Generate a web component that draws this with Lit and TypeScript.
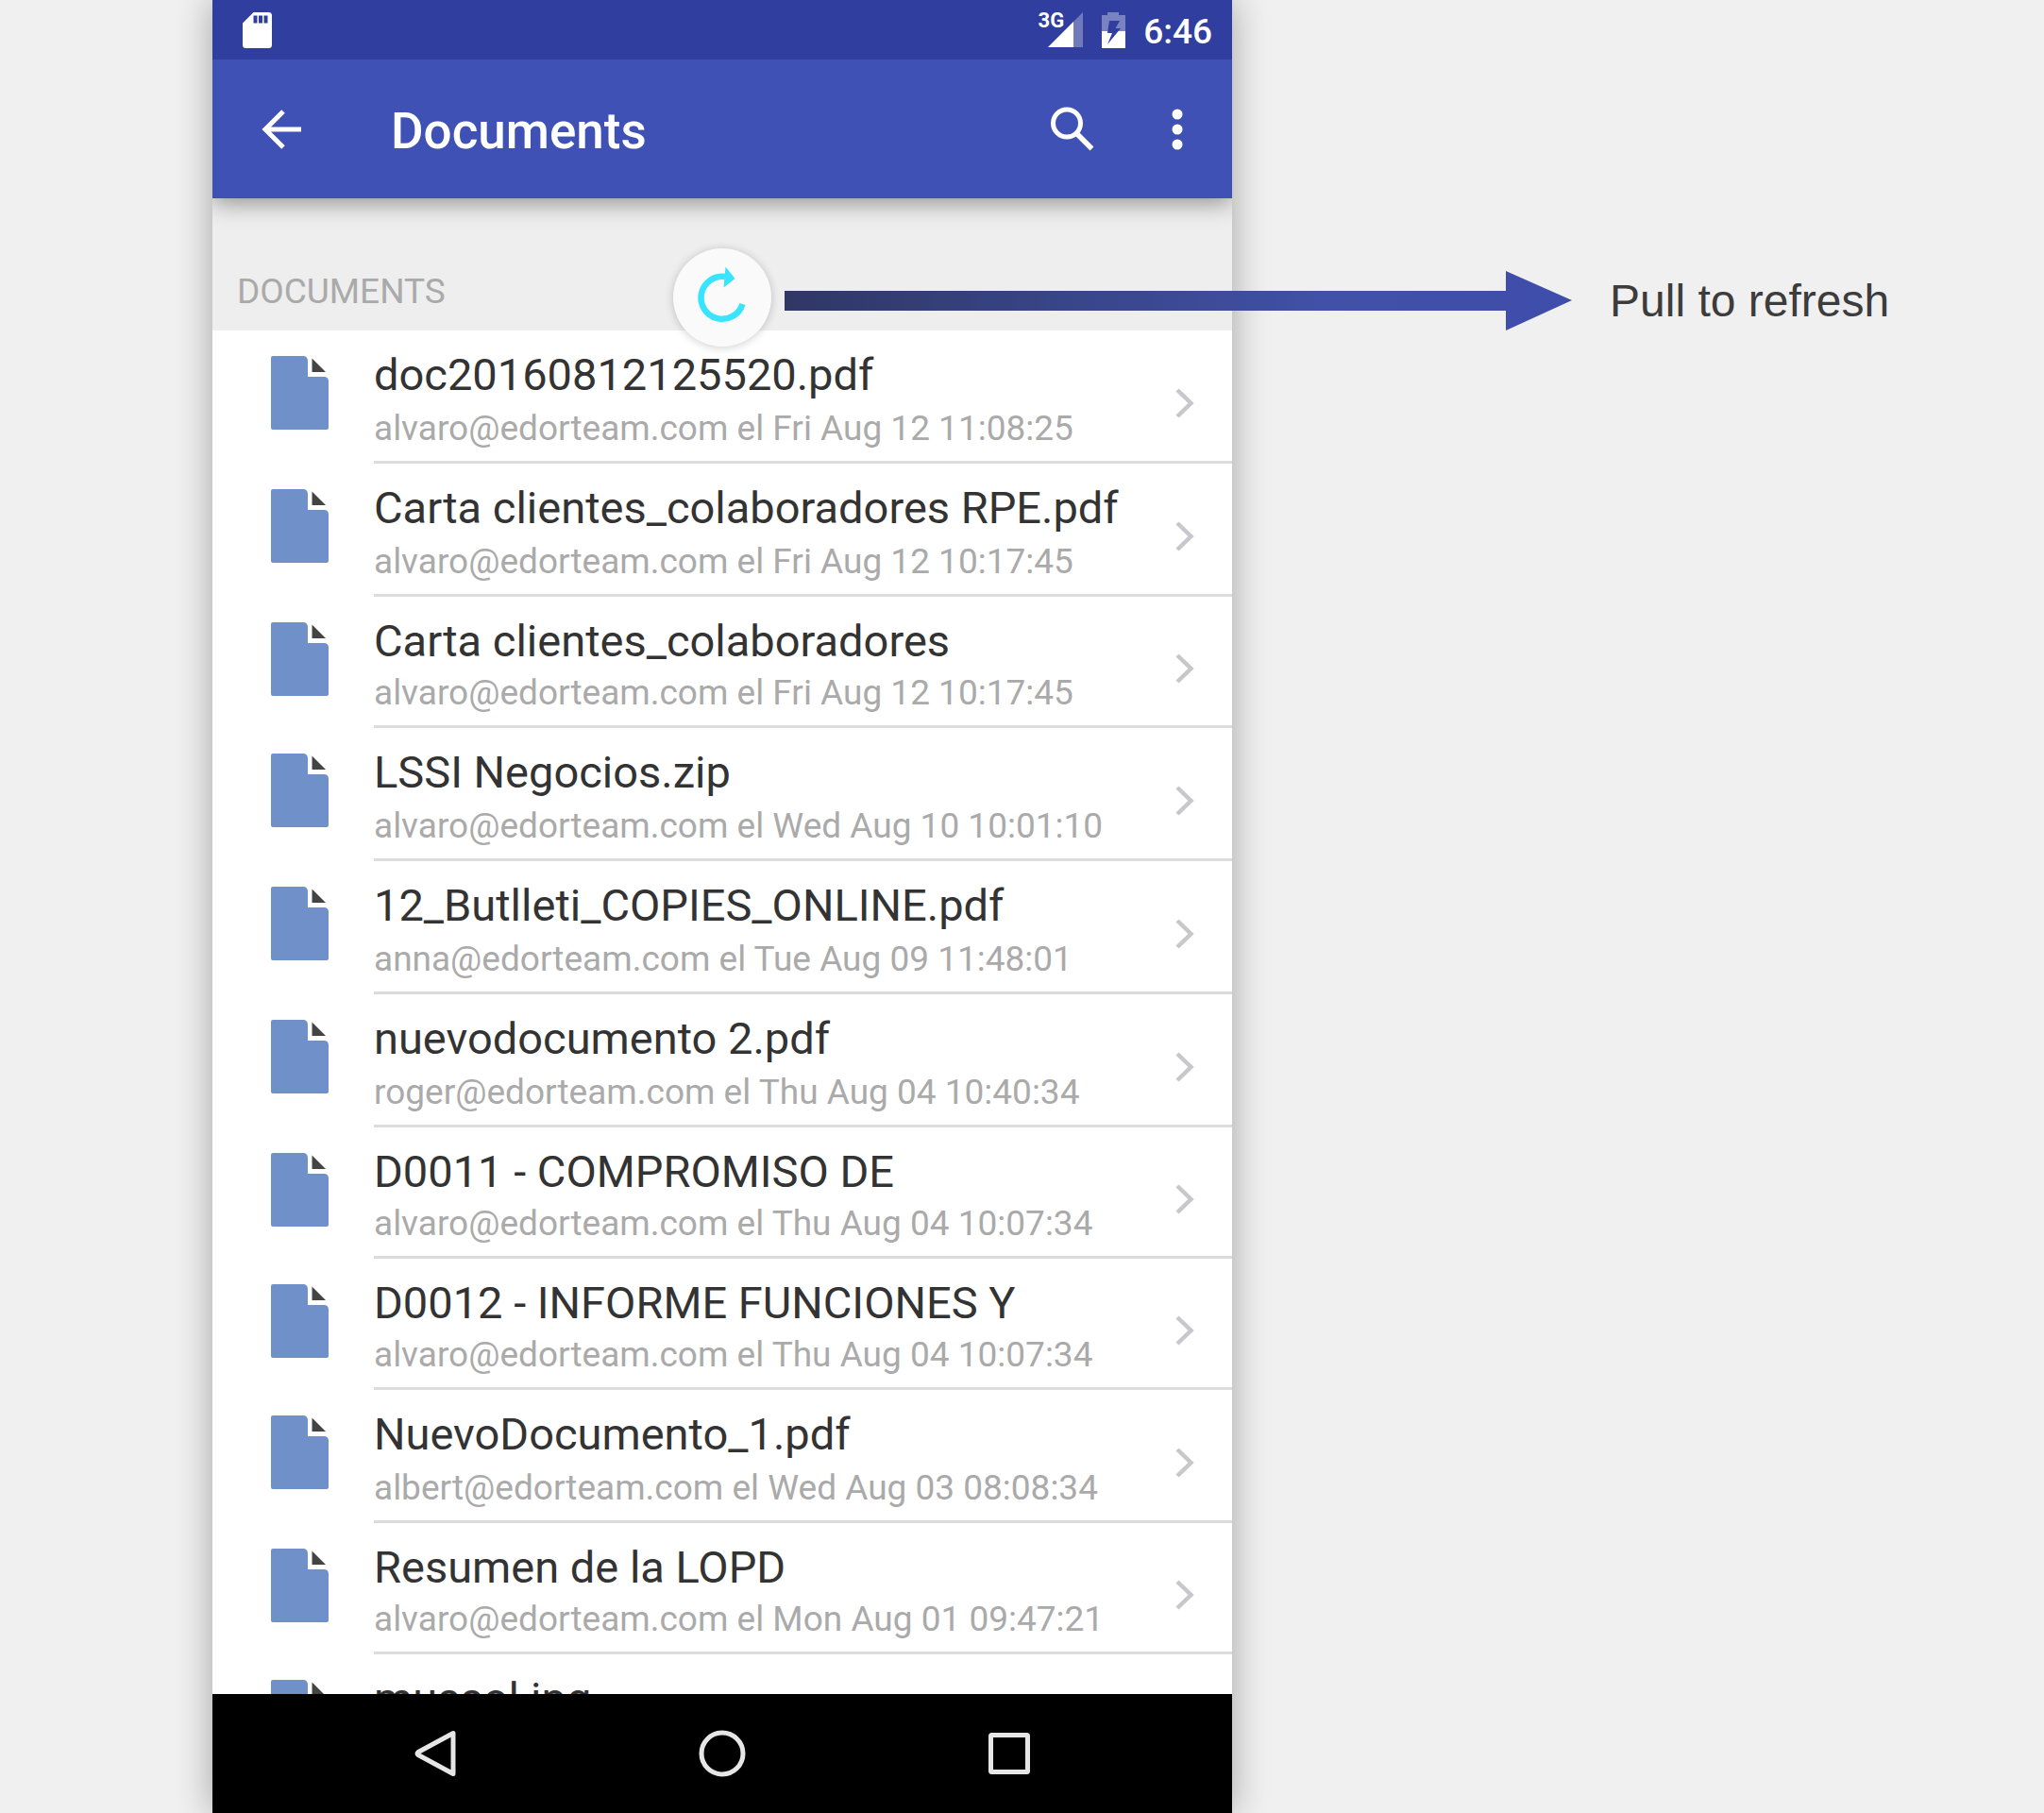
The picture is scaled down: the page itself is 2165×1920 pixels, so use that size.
import { LitElement, html, css } from "lit";
import { customElement, property } from "lit/decorators.js";

interface DocumentEntry {
  title: string;
  detail: string;
  compact?: boolean;
}

const DOCUMENTS: DocumentEntry[] = [
  { title: "doc20160812125520.pdf", detail: "alvaro@edorteam.com el Fri Aug 12 11:08:25" },
  { title: "Carta clientes_colaboradores RPE.pdf", detail: "alvaro@edorteam.com el Fri Aug 12 10:17:45" },
  { title: "Carta clientes_colaboradores", detail: "alvaro@edorteam.com el Fri Aug 12 10:17:45", compact: true },
  { title: "LSSI Negocios.zip", detail: "alvaro@edorteam.com el Wed Aug 10 10:01:10" },
  { title: "12_Butlleti_COPIES_ONLINE.pdf", detail: "anna@edorteam.com el Tue Aug 09 11:48:01" },
  { title: "nuevodocumento 2.pdf", detail: "roger@edorteam.com el Thu Aug 04 10:40:34" },
  { title: "D0011 - COMPROMISO DE", detail: "alvaro@edorteam.com el Thu Aug 04 10:07:34", compact: true },
  { title: "D0012 - INFORME FUNCIONES Y", detail: "alvaro@edorteam.com el Thu Aug 04 10:07:34", compact: true },
  { title: "NuevoDocumento_1.pdf", detail: "albert@edorteam.com el Wed Aug 03 08:08:34" },
  { title: "Resumen de la LOPD", detail: "alvaro@edorteam.com el Mon Aug 01 09:47:21", compact: true },
  { title: "mussol.jpg", detail: "" },
];

@customElement("status-bar")
export class StatusBar extends LitElement {
  static styles = css`
    :host {
      display: flex;
      align-items: center;
      height: 63px;
      padding: 0 21px 0 32px;
      background: #303e9f;
      color: #fff;
      font-family: Roboto, sans-serif;
      font-weight: 500;
    }
    svg {
      display: block;
    }
    .system {
      display: flex;
      align-items: center;
      gap: 17px;
      margin-left: auto;
    }
    .network {
      display: flex;
      align-items: flex-start;
    }
    .label {
      margin-right: -17px;
      font-size: 22px;
      line-height: 18px;
      font-weight: 700;
    }
    .clock {
      padding-top: 4px;
      font-size: 37px;
      line-height: 64px;
    }
  `;

  render() {
    return html`
      <svg width="31" height="38" viewBox="0 0 31 38" aria-hidden="true">
        <path
          fill="#fff"
          fill-rule="evenodd"
          d="M11.500 0H27.500Q31 0 31 3.500V34.500Q31 38 27.500 38H3.500Q0 38 0 34.500V11.500ZM11.500 3.500V11.500H15.500V3.500ZM17 3.500V11.500H21V3.500ZM22.500 3.500V11.500H26.500V3.500Z"
        />
      </svg>
      <div class="system">
        <div class="network">
          <span class="label">3G</span>
          <svg width="37" height="37" viewBox="0 0 37 37" aria-hidden="true">
            <path fill="#7079bc" d="M37 0V37H0Z" />
            <path fill="#fff" d="M27 10V37H0Z" />
          </svg>
        </div>
        <svg width="30" height="38" viewBox="0 0 30 38" aria-hidden="true">
          <path fill="#7a83c1" d="M9 0H21V3H28V20H3V3H9Z" />
          <path fill="#fff" d="M3 20H28V38H3Z" />
          <path fill="#303e9f" d="M11 9H22L17.500 17H23L9 34L14 22H9Z" />
        </svg>
        <span class="clock">6:46</span>
      </div>
    `;
  }
}

@customElement("tool-bar")
export class ToolBar extends LitElement {
  static styles = css`
    :host {
      position: relative;
      z-index: 1;
      display: flex;
      align-items: center;
      height: 147px;
      padding: 0 24px 0 40px;
      background: #3f51b5;
      color: #fff;
      font-family: Roboto, sans-serif;
      box-shadow: 0 4px 24px rgba(0, 0, 0, 0.42);
      clip-path: inset(0 0 -40px 0);
    }
    button {
      display: grid;
      place-items: center;
      width: 68px;
      height: 96px;
      padding: 0;
      border: 0;
      background: none;
      color: inherit;
    }
    svg {
      display: block;
    }
    .title {
      margin: 0 auto 0 81px;
      padding-top: 4px;
      font-size: 53px;
      line-height: 64px;
      font-weight: 500;
    }
    .actions {
      display: flex;
      gap: 44px;
    }
  `;

  render() {
    return html`
      <button type="button" aria-label="Back">
        <svg width="44" height="44" viewBox="0 0 44 44" aria-hidden="true">
          <path d="M42 22H5M23 3L4 22L23 41" fill="none" stroke="#fff" stroke-width="5" />
        </svg>
      </button>
      <h1 class="title">Documents</h1>
      <div class="actions">
        <button type="button" aria-label="Search">
          <svg width="48" height="48" viewBox="0 0 48 48" aria-hidden="true">
            <circle cx="19" cy="17.500" r="14.500" fill="none" stroke="#fff" stroke-width="5" />
            <path d="M29.500 28.500L45.500 44.500" stroke="#fff" stroke-width="5.500" />
          </svg>
        </button>
        <button type="button" aria-label="More options">
          <svg width="12" height="44" viewBox="0 0 12 44" aria-hidden="true">
            <circle cx="6" cy="6" r="5.500" fill="#fff" />
            <circle cx="6" cy="22" r="5.500" fill="#fff" />
            <circle cx="6" cy="38" r="5.500" fill="#fff" />
          </svg>
        </button>
      </div>
    `;
  }
}

@customElement("document-row")
export class DocumentRow extends LitElement {
  @property({ attribute: false }) entry!: DocumentEntry;

  static styles = css`
    :host {
      display: block;
      font-family: Roboto, sans-serif;
    }
    .row {
      display: flex;
      padding-left: 62px;
      color: inherit;
      text-decoration: none;
    }
    .file {
      display: block;
      flex: none;
      margin: 27px 47px 0 0;
    }
    .body {
      flex: 1;
      min-width: 0;
      display: flex;
      align-items: center;
      box-sizing: border-box;
      height: 141px;
      padding-right: 40px;
      border-bottom: 3px solid #dcdcdc;
    }
    .compact .body {
      height: 139px;
    }
    .text {
      flex: 1;
      align-self: flex-start;
      min-width: 0;
      padding-top: 18px;
      white-space: nowrap;
    }
    .title {
      font-size: 47px;
      line-height: 58px;
      color: #333;
    }
    .detail {
      font-size: 37px;
      line-height: 56px;
      color: #aaa;
    }
    .compact .detail {
      line-height: 52px;
    }
    .chevron {
      display: block;
      flex: none;
      margin-top: 16px;
    }
  `;

  render() {
    const { title, detail, compact } = this.entry;
    return html`
      <a class="row ${compact ? "compact" : ""}" href="#">
        <svg class="file" width="62" height="79" viewBox="0 0 62 79" aria-hidden="true">
          <path
            fill="#6f90c8"
            d="M2 0H34Q39 0 39 5.500V22H56Q61 22 61 27V76Q61 78 59 78H2Q0 78 0 76V2Q0 0 2 0Z"
          />
          <path fill="#444" d="M43.500 2.500L58 17H43.500Z" />
        </svg>
        <div class="body">
          <div class="text">
            <div class="title">${title}</div>
            <div class="detail">${detail}</div>
          </div>
          <svg class="chevron" width="20" height="32" viewBox="0 0 20 32" aria-hidden="true">
            <path d="M2 2L16.500 16L2 30" fill="none" stroke="#c7c7cc" stroke-width="4.500" />
          </svg>
        </div>
      </a>
    `;
  }
}

@customElement("nav-bar")
export class NavBar extends LitElement {
  static styles = css`
    :host {
      display: flex;
      justify-content: center;
      align-items: center;
      gap: 204px;
      height: 126px;
      background: #000;
    }
    button {
      display: grid;
      place-items: center;
      width: 100px;
      height: 100px;
      padding: 0;
      border: 0;
      background: none;
    }
    svg {
      display: block;
      fill: none;
      stroke: #e6e6e6;
      stroke-width: 5;
      stroke-linejoin: round;
    }
  `;

  render() {
    return html`
      <button type="button" aria-label="Back">
        <svg width="52" height="52" viewBox="0 0 52 52" aria-hidden="true">
          <path d="M45 4.500V47.500L8 27.500Q6 26 8 24.500Z" />
        </svg>
      </button>
      <button type="button" aria-label="Home">
        <svg width="52" height="52" viewBox="0 0 52 52" aria-hidden="true">
          <circle cx="26" cy="26" r="22" />
        </svg>
      </button>
      <button type="button" aria-label="Recent apps">
        <svg width="52" height="52" viewBox="0 0 52 52" aria-hidden="true">
          <rect x="6.500" y="6.500" width="39" height="39" rx="1" />
        </svg>
      </button>
    `;
  }
}

@customElement("app-root")
export class AppRoot extends LitElement {
  static styles = css`
    :host {
      display: grid;
      grid-template-columns: minmax(0, 225fr) minmax(0, 1080fr) minmax(0, 860fr);
      height: 100vh;
      overflow: hidden;
      background: #f0f0f0;
      font-family: Roboto, sans-serif;
    }
    .phone {
      grid-column: 2;
      display: flex;
      flex-direction: column;
      min-height: 0;
      background: #fff;
      box-shadow: 0 0 36px rgba(0, 0, 0, 0.32);
    }
    .content {
      position: relative;
      flex: 1;
      min-height: 0;
    }
    .list {
      height: 100%;
      overflow: hidden;
    }
    .section {
      display: flex;
      align-items: flex-end;
      box-sizing: border-box;
      height: 140px;
      margin: 0;
      padding: 0 26px 19px;
      background: #eee;
      color: #aaa;
      font-size: 37px;
      line-height: 44px;
      font-weight: 400;
    }
    .refresh {
      position: absolute;
      top: 53px;
      left: 50%;
      transform: translateX(-50%);
      display: grid;
      place-items: center;
      width: 104px;
      height: 104px;
      padding: 0;
      border: 0;
      border-radius: 50%;
      background: #fafafa;
      box-shadow: 0 1px 10px rgba(0, 0, 0, 0.2);
    }
    .refresh svg {
      display: block;
    }
    .callout {
      position: absolute;
      top: 77px;
      left: 606px;
      display: flex;
      align-items: center;
      gap: 40px;
      color: #3c3c3c;
      font-family: "Liberation Sans", sans-serif;
      font-size: 48px;
      line-height: 64px;
      white-space: nowrap;
    }
    .callout svg {
      display: block;
    }
  `;

  render() {
    return html`
      <main class="phone">
        <status-bar></status-bar>
        <tool-bar></tool-bar>
        <div class="content">
          <div class="list">
            <h2 class="section">DOCUMENTS</h2>
            ${DOCUMENTS.map((entry) => html`<document-row .entry=${entry}></document-row>`)}
          </div>
          <button class="refresh" type="button" aria-label="Refresh">
            <svg width="104" height="104" viewBox="0 0 104 104" aria-hidden="true">
              <path
                d="M55 30A22.500 22.500 0 1 0 73.500 59"
                fill="none"
                stroke="#38e5ff"
                stroke-width="6.500"
              />
              <path d="M55.500 19.500L65.500 32L53.500 41.500Z" fill="#38e5ff" />
            </svg>
          </button>
          <div class="callout">
            <svg width="834" height="64" viewBox="0 0 834 64" aria-hidden="true">
              <defs>
                <linearGradient id="shaft" x1="0" x2="1" y1="0" y2="0">
                  <stop offset="0" stop-color="#303764" />
                  <stop offset="0.350" stop-color="#384587" />
                  <stop offset="0.700" stop-color="#4250a8" />
                  <stop offset="1" stop-color="#3f4dab" />
                </linearGradient>
              </defs>
              <path fill="url(#shaft)" d="M0 21H764V0L834 31L764 63V42H0Z" />
            </svg>
            <span>Pull to refresh</span>
          </div>
        </div>
        <nav-bar></nav-bar>
      </main>
    `;
  }
}
